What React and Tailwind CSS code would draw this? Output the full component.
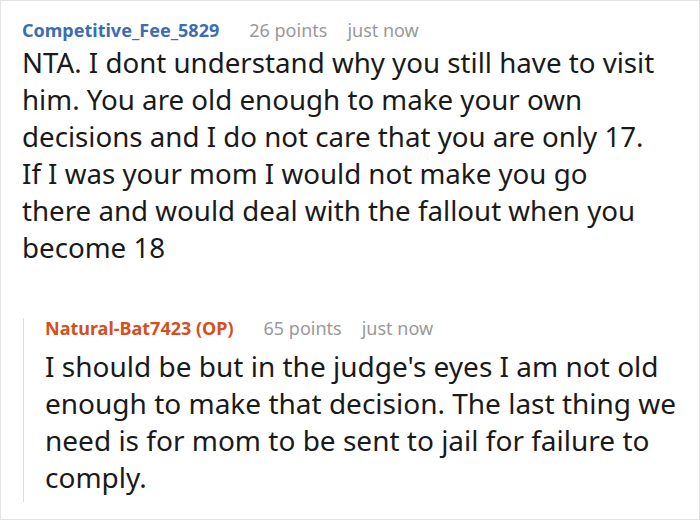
export default function App() {
  return (
    <div className="w-[700px] h-[520px] bg-white border border-[#e3e3e3] overflow-hidden" style={{ fontFamily: '"Noto Sans", "Open Sans", sans-serif' }}>
      <div className="pl-[21px] pt-[16px]">
        <div className="flex items-baseline text-[18px] leading-[26px]">
          <span className="font-bold text-[#3b6cb4]">Competitive_Fee_5829</span>
          <span className="ml-[30px] text-[#999999]">26 points</span>
          <span className="ml-[20px] text-[#999999]">just now</span>
        </div>
        <p className="mt-[1px] text-[27.7px] leading-[37px] text-[#1a1a1a] w-[670px]">
          NTA. I dont understand why you still have to visit<br />
          him. You are old enough to make your own<br />
          decisions and I do not care that you are only 17.<br />
          If I was your mom I would not make you go<br />
          there and would deal with the fallout when you<br />
          become 18
        </p>
      </div>
      <div className="ml-[22px] mt-[52px] border-l border-[#dddddd] pl-[21px] pb-[6px]">
        <div className="flex items-baseline text-[18px] leading-[20px]">
          <span className="font-bold text-[#d4501e]">Natural-Bat7423 (OP)</span>
          <span className="ml-[30px] text-[#999999]">65 points</span>
          <span className="ml-[20px] text-[#999999]">just now</span>
        </div>
        <p className="mt-[10px] text-[28px] leading-[37px] text-[#1a1a1a] w-[650px]">
          I should be but in the judge's eyes I am not old enough to make that decision. The last thing we need is for mom to be sent to jail for failure to comply.
        </p>
      </div>
    </div>
  );
}
